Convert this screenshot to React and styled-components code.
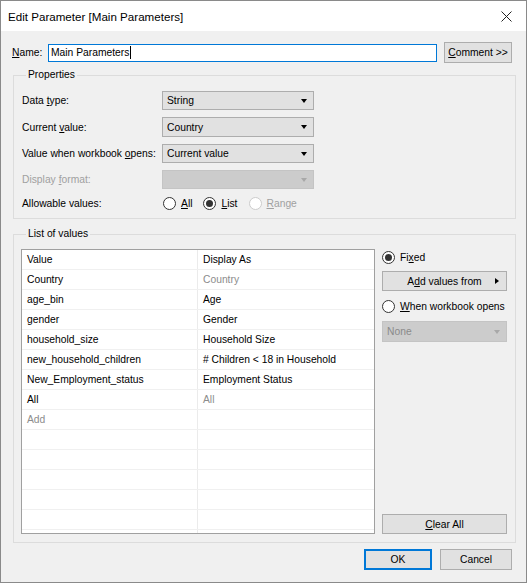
import React from "react";
import styled, { createGlobalStyle } from "styled-components";

const GlobalStyle = createGlobalStyle`
  html, body {
    margin: 0;
    padding: 0;
    background: #ffffff;
  }
  * {
    box-sizing: border-box;
  }
`;

const FONT = `"Liberation Sans", Arial, sans-serif`;

const Window = styled.div`
  width: 527px;
  height: 583px;
  border: 1px solid #8a8a8a;
  display: flex;
  flex-direction: column;
  font-family: ${FONT};
  font-size: 10.3px;
  color: #000;
  background: #f0f0f0;
  overflow: hidden;
  white-space: nowrap;
`;

const TitleBar = styled.div`
  height: 30px;
  background: #fff;
  display: flex;
  align-items: center;
  justify-content: space-between;
  padding: 0 14px 0 7px;
  font-size: 11.6px;
  flex-shrink: 0;
`;

const Body = styled.div`
  flex: 1;
  display: flex;
  flex-direction: column;
  padding: 11px 10px 0 11px;
`;

const NameRow = styled.div`
  display: flex;
  align-items: center;
  height: 21px;
  padding-right: 4px;
`;

const NameLabel = styled.span`
  width: 36px;
`;

const TextInput = styled.div`
  flex: 1;
  height: 18px;
  border: 1px solid #0078d7;
  background: #fff;
  display: flex;
  align-items: center;
  padding-left: 2px;
  margin-right: 7px;
`;

const Caret = styled.span`
  display: inline-block;
  width: 1px;
  height: 13px;
  background: #000;
  margin-left: 1px;
`;

const Button = styled.div`
  height: ${(p) => p.$h || 20}px;
  width: ${(p) => (p.$w ? `${p.$w}px` : "auto")};
  border: ${(p) => (p.$default ? "2px solid #0078d7" : "1px solid #adadad")};
  background: #e1e1e1;
  display: flex;
  align-items: center;
  justify-content: center;
  position: relative;
  flex-shrink: 0;
`;

const Group = styled.fieldset`
  margin: ${(p) => p.$mt || 0}px 0 0 1px;
  border: 1px solid #dcdcdc;
  padding: ${(p) => p.$pad};
  min-width: 0;
`;

const Legend = styled.legend`
  padding: 0 2px;
  margin-left: 4px;
  line-height: 14px;
`;

const PropGrid = styled.div`
  display: grid;
  grid-template-columns: 140px 152px;
  grid-template-rows: 19px 20px 19px 19px 14px;
  row-gap: 7px;
  align-items: center;
`;

const PropLabel = styled.span`
  color: ${(p) => (p.$disabled ? "#a0a0a0" : "#000")};
`;

const Select = styled.div`
  height: ${(p) => p.$h || 19}px;
  border: 1px solid ${(p) => (p.$disabled ? "#c4c4c4" : "#adadad")};
  background: ${(p) => (p.$disabled ? "#cccccc" : "#e1e1e1")};
  color: ${(p) => (p.$disabled ? "#8a8a8a" : "#000")};
  display: flex;
  align-items: center;
  justify-content: space-between;
  padding: 0 6px 0 4px;
`;

const Arrow = styled.span`
  width: 0;
  height: 0;
  border-left: 3.5px solid transparent;
  border-right: 3.5px solid transparent;
  border-top: 4px solid ${(p) => (p.$disabled ? "#a8a8a8" : "#000")};
`;

const RightArrow = styled.span`
  position: absolute;
  right: 7px;
  top: 6px;
  width: 0;
  height: 0;
  border-top: 3.5px solid transparent;
  border-bottom: 3.5px solid transparent;
  border-left: 4px solid #000;
`;

const RadioRow = styled.div`
  display: flex;
  align-items: center;
  gap: 11px;
  padding-left: 1px;
`;

const RadioItem = styled.label`
  display: flex;
  align-items: center;
  gap: 5px;
  color: ${(p) => (p.$disabled ? "#a0a0a0" : "#000")};
`;

const RadioCircle = styled.span`
  width: 13px;
  height: 13px;
  border-radius: 50%;
  border: 1px solid ${(p) => (p.$disabled ? "#cccccc" : "#333")};
  background: #fff;
  display: flex;
  align-items: center;
  justify-content: center;
  flex-shrink: 0;
  &::after {
    content: "";
    display: ${(p) => (p.$checked ? "block" : "none")};
    width: 7px;
    height: 7px;
    border-radius: 50%;
    background: #333;
  }
`;

const ListArea = styled.div`
  display: flex;
  gap: 5px;
  align-items: stretch;
`;

const Table = styled.div`
  width: 354px;
  height: 285px;
  margin-left: -1px;
  margin-right: 2px;
  border: 1px solid #a0a0a0;
  background: #fff;
  overflow: hidden;
`;

const Row = styled.div`
  display: grid;
  grid-template-columns: 176px 1fr;
  height: 20px;
  border-bottom: 1px solid #f0f0f0;
`;

const Cell = styled.div`
  display: flex;
  align-items: center;
  padding-left: 5px;
  color: ${(p) => (p.$muted ? "#8c8c8c" : "#000")};
  border-right: ${(p) => (p.$first ? "1px solid #ebebeb" : "none")};
`;

const SidePanel = styled.div`
  flex: 1;
  display: flex;
  flex-direction: column;
`;

const SideRadio = styled(RadioItem)`
  height: 16px;
  margin-top: ${(p) => p.$mt || 0}px;
  margin-bottom: ${(p) => p.$mb || 0}px;
`;

const Spacer = styled.div`
  flex: 1;
`;

const Footer = styled.div`
  display: flex;
  justify-content: flex-end;
  gap: 8px;
  padding: 6px 4px 0 0;
`;

const U = styled.span`
  text-decoration: underline;
  text-underline-offset: 1px;
`;

const CloseIcon = () => (
  <svg width="11" height="11" viewBox="0 0 11 11">
    <path d="M0.5 0.5 L10.5 10.5 M10.5 0.5 L0.5 10.5" stroke="#222" strokeWidth="1" />
  </svg>
);

const rows = [
  ["Value", "Display As", false],
  ["Country", "Country", true],
  ["age_bin", "Age", false],
  ["gender", "Gender", false],
  ["household_size", "Household Size", false],
  ["new_household_children", "# Children < 18 in Household", false],
  ["New_Employment_status", "Employment Status", false],
  ["All", "All", true],
];

const Radio = ({ checked, disabled, children }) => (
  <RadioItem $disabled={disabled}>
    <RadioCircle $checked={checked} $disabled={disabled} />
    <span>{children}</span>
  </RadioItem>
);

export default function App() {
  return (
    <>
      <GlobalStyle />
      <Window>
        <TitleBar>
          <span>Edit Parameter [Main Parameters]</span>
          <CloseIcon />
        </TitleBar>
        <Body>
          <NameRow>
            <NameLabel>
              <U>N</U>ame:
            </NameLabel>
            <TextInput>
              Main Parameters
              <Caret />
            </TextInput>
            <Button $w={68} $h={21}>
              <span>
                <U>C</U>omment &gt;&gt;
              </span>
            </Button>
          </NameRow>

          <Group $mt={5} $pad="9px 8px 8px 8px">
            <Legend>Properties</Legend>
            <PropGrid>
              <PropLabel>
                Data <U>t</U>ype:
              </PropLabel>
              <Select>
                String
                <Arrow />
              </Select>
              <PropLabel>
                Current <U>v</U>alue:
              </PropLabel>
              <Select $h={20}>
                Country
                <Arrow />
              </Select>
              <PropLabel>
                Value when workbook <U>o</U>pens:
              </PropLabel>
              <Select>
                Current value
                <Arrow />
              </Select>
              <PropLabel $disabled>
                Display <U>f</U>ormat:
              </PropLabel>
              <Select $disabled>
                <span />
                <Arrow $disabled />
              </Select>
              <PropLabel>Allowable values:</PropLabel>
              <RadioRow>
                <Radio>
                  <U>A</U>ll
                </Radio>
                <Radio checked>
                  <U>L</U>ist
                </Radio>
                <Radio disabled>
                  <U>R</U>ange
                </Radio>
              </RadioRow>
            </PropGrid>
          </Group>

          <Group $mt={8} $pad="8px 8px 8px 8px">
            <Legend>List of values</Legend>
            <ListArea>
              <Table>
                {rows.map(([v, d, muted]) => (
                  <Row key={v}>
                    <Cell $first>{v}</Cell>
                    <Cell $muted={muted}>{d}</Cell>
                  </Row>
                ))}
                <Row>
                  <Cell $first $muted>
                    Add
                  </Cell>
                  <Cell />
                </Row>
                {Array.from({ length: 6 }).map((_, i) => (
                  <Row key={i}>
                    <Cell $first />
                    <Cell />
                  </Row>
                ))}
              </Table>
              <SidePanel>
                <SideRadio $mb={6}>
                  <RadioCircle $checked />
                  <span>
                    Fi<U>x</U>ed
                  </span>
                </SideRadio>
                <Button>
                  <span>
                    A<U>d</U>d values from
                  </span>
                  <RightArrow />
                </Button>
                <SideRadio $mt={7} $mb={7}>
                  <RadioCircle />
                  <span>
                    <U>W</U>hen workbook opens
                  </span>
                </SideRadio>
                <Select $disabled $h={21}>
                  None
                  <Arrow $disabled />
                </Select>
                <Spacer />
                <Button>
                  <span>
                    <U>C</U>lear All
                  </span>
                </Button>
              </SidePanel>
            </ListArea>
          </Group>

          <Footer>
            <Button $w={68} $h={21} $default>
              OK
            </Button>
            <Button $w={72} $h={21}>
              Cancel
            </Button>
          </Footer>
        </Body>
      </Window>
    </>
  );
}
